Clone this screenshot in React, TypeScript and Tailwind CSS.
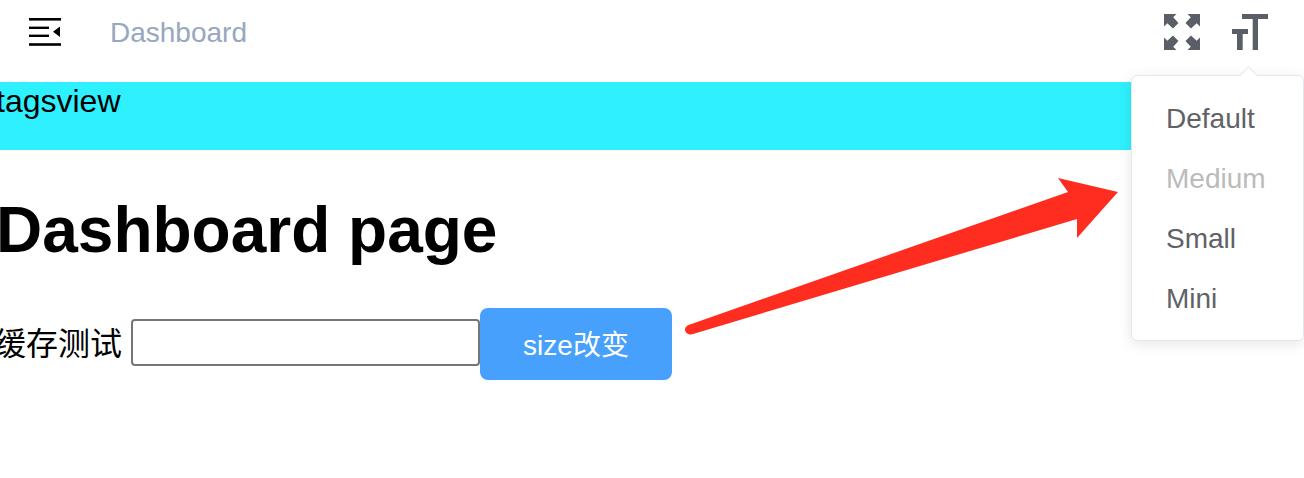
const sans = "font-['Liberation_Sans','Noto_Sans_CJK_SC',sans-serif]";

function Hamburger() {
  return (
    <svg width="32" height="28" viewBox="0 0 32 28" fill="#000">
      <rect x="0" y="0" width="32" height="2.6" />
      <rect x="0" y="8.6" width="20" height="2.4" />
      <rect x="0" y="16.6" width="20" height="2.4" />
      <rect x="0" y="25.2" width="32" height="2.6" />
      <path d="M31 8.5v10.5l-7-5.2z" />
    </svg>
  );
}

function FullscreenIcon() {
  return (
    <svg width="36" height="36" viewBox="0 0 36 36" fill="#5a5e66">
      <path d="M0 0h12.500L9.200 3.300l5.300 5.700-5.500 5.500-5.700-5.300L0 12.500z" />
      <path d="M36 0H23.500l3.300 3.300-5.300 5.700 5.500 5.500 5.700-5.300L36 12.500z" />
      <path d="M0 36h12.500l-3.300-3.300 5.300-5.700-5.500-5.500-5.700 5.300L0 23.500z" />
      <path d="M36 36H23.500l3.300-3.300-5.300-5.700 5.500-5.500 5.700 5.300L36 23.500z" />
    </svg>
  );
}

function SizeIcon() {
  return (
    <svg width="36" height="36" viewBox="0 0 36 36" fill="#5a5e66">
      <path d="M10 0h26v5H26v31h-5.300V5H10z" />
      <path d="M0 15h16v5h-5.300v16H5V20H0z" />
    </svg>
  );
}

function SizeMenu() {
  const items = ["Default", "Medium", "Small", "Mini"];
  return (
    <div className="absolute left-[1131px] top-[75px] w-[173px] h-[266px] bg-white border border-[#e4e7ed] rounded-[6px] shadow-[0_3px_14px_rgba(0,0,0,0.1)] py-[13px]">
      <div className="absolute -top-[7px] left-[110px] w-[13px] h-[13px] rotate-45 bg-white border-l border-t border-[#e4e7ed]" />
      <ul className="relative">
        {items.map((item) => (
          <li
            key={item}
            className={`h-[60px] pl-[34px] flex items-center text-[28px] ${item === "Medium" ? "text-[#bbbbbb]" : "text-[#606266]"}`}
          >
            {item}
          </li>
        ))}
      </ul>
    </div>
  );
}

function Arrow() {
  return (
    <svg className="absolute left-[680px] top-[170px]" width="445" height="170" viewBox="0 0 445 170">
      <path
        d="M11 164.500C7 164.500 5 162 5 159.500C5 157 7 155.500 10 154.500L388 22L378 8L438 22L397 68L397 49L13 164z"
        fill="#ff2d1f"
      />
    </svg>
  );
}

export default function App() {
  return (
    <div className={`relative w-[1304px] h-[478px] overflow-hidden bg-white ${sans}`}>
      <header className="h-[82px] pb-[16px] flex items-center">
        <div className="ml-[29px] w-[32px] h-[28px] flex -mt-[2px]">
          <Hamburger />
        </div>
        <span className="ml-[49px] text-[28px] text-[#97a8be]">Dashboard</span>
        <div className="ml-auto mr-[36px] flex items-center gap-[32px] -mt-[2px]">
          <FullscreenIcon />
          <SizeIcon />
        </div>
      </header>
      <div className="h-[68px] bg-[#2ff0ff] -indent-[4px] text-[32px] leading-[38px] text-black">tagsview</div>
      <h1 className="mt-[42px] -ml-[4px] text-[64px] leading-[76px] font-bold text-black">Dashboard page</h1>
      <div className="mt-[40px] -ml-[6px] flex items-center">
        <label className="text-[32px] text-black">缓存测试</label>
        <input
          type="text"
          className="ml-[9px] -mt-[4px] w-[349px] h-[47px] border-2 border-[#767676] rounded-[4px] bg-white"
        />
        <button className="w-[192px] h-[72px] pt-[3px] bg-[#46a0fc] rounded-[8px] text-white text-[28px]">size改变</button>
      </div>
      <Arrow />
      <SizeMenu />
    </div>
  );
}
